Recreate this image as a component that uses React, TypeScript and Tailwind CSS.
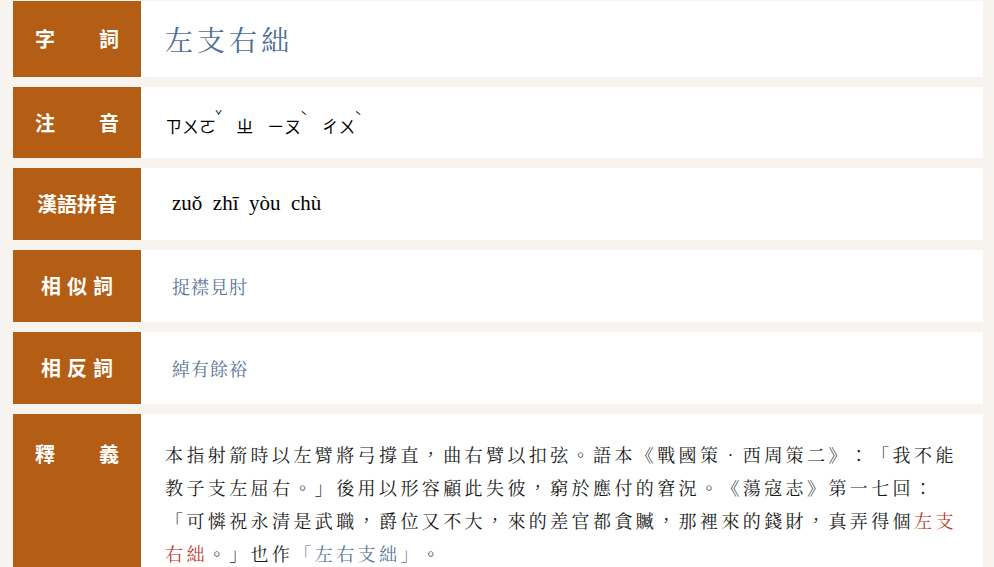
const CJK = '"Noto Serif CJK TC", "Noto Sans CJK TC", serif';

function Label({ children, top = false }: { children: React.ReactNode; top?: boolean }) {
  return (
    <div
      className={`w-[128px] shrink-0 bg-[#b35e14] text-white font-bold text-[20px] flex justify-center ${top ? 'items-start pt-[25px]' : 'items-center'}`}
      style={{ fontFamily: '"Noto Sans CJK TC", sans-serif' }}
    >
      {children}
    </div>
  );
}

function Row({ h, label, top, children }: { h?: string; label: React.ReactNode; top?: boolean; children: React.ReactNode }) {
  return (
    <div className={`flex bg-white ${h ?? ''}`}>
      <Label top={top}>{label}</Label>
      <div className={`flex-1 flex ${top ? 'items-start' : 'items-center'}`}>{children}</div>
    </div>
  );
}

function Spread({ a, b }: { a: string; b: string }) {
  return (
    <div className="w-[84px] flex justify-between">
      <span>{a}</span>
      <span>{b}</span>
    </div>
  );
}

// zhuyin syllable, tone mark raised at the top right
function Syl({ s, tone }: { s: string; tone?: string }) {
  return (
    <span className="inline-flex items-start">
      <span>{s}</span>
      {tone && <span className="text-[12px] leading-[12px] -ml-[1px] -mt-[3px]">{tone}</span>}
    </span>
  );
}

export default function App() {
  const red = 'text-[#c0392b]';
  const blue = 'text-[#5a7397]';
  return (
    <div className="w-[994px] h-[567px] overflow-hidden bg-[#f7f3ef]">
      <div className="flex flex-col gap-[10px] pl-[13px] pr-[11px] pt-[1px]">
        <Row h="h-[76px]" label={<Spread a="字" b="詞" />}>
          <span className="pl-[24px] text-[28px] tracking-[4px] text-[#4f6e96]" style={{ fontFamily: CJK }}>
            左支右絀
          </span>
        </Row>
        <Row h="h-[71px]" label={<Spread a="注" b="音" />}>
          <div className="pl-[24px] flex gap-[14px] text-[17px] text-black pt-[6px]" style={{ fontFamily: '"Noto Sans CJK TC", sans-serif' }}>
            <Syl s="ㄗㄨㄛ" tone="ˇ" />
            <Syl s="ㄓ" />
            <Syl s="ㄧㄡ" tone="ˋ" />
            <Syl s="ㄔㄨ" tone="ˋ" />
          </div>
        </Row>
        <Row h="h-[72px]" label={<span>漢語拼音</span>}>
          <span className="pl-[31px] text-[21px] text-black whitespace-pre" style={{ fontFamily: '"Liberation Serif", serif' }}>
            zuǒ  zhī  yòu  chù
          </span>
        </Row>
        <Row h="h-[72px]" label={<span className="tracking-[6px] pl-[6px]">相似詞</span>}>
          <span className={`pl-[31px] text-[18px] tracking-[1px] ${blue}`} style={{ fontFamily: CJK }}>
            捉襟見肘
          </span>
        </Row>
        <Row h="h-[72px]" label={<span className="tracking-[6px] pl-[6px]">相反詞</span>}>
          <span className={`pl-[31px] text-[18px] tracking-[1px] ${blue}`} style={{ fontFamily: CJK }}>
            綽有餘裕
          </span>
        </Row>
        <Row h="h-[200px]" top label={<Spread a="釋" b="義" />}>
          <div
            className="pl-[24px] pt-[24px] text-[18px] leading-[33px] tracking-[3.4px] text-[#1a1a1a] whitespace-nowrap [text-spacing-trim:space-all]"
            style={{ fontFamily: CJK }}
          >
            本指射箭時以左臂將弓撐直，曲右臂以扣弦。語本《戰國策．西周策二》：「我不能
            <br />
            教子支左屈右。」後用以形容顧此失彼，窮於應付的窘況。《蕩寇志》第一七回：
            <br />
            「可憐祝永清是武職，爵位又不大，來的差官都貪贓，那裡來的錢財，真弄得個<span className={red}>左支</span>
            <br />
            <span className={red}>右絀</span>。」也作<span className={blue}>「左右支絀」</span>。
          </div>
        </Row>
      </div>
    </div>
  );
}
